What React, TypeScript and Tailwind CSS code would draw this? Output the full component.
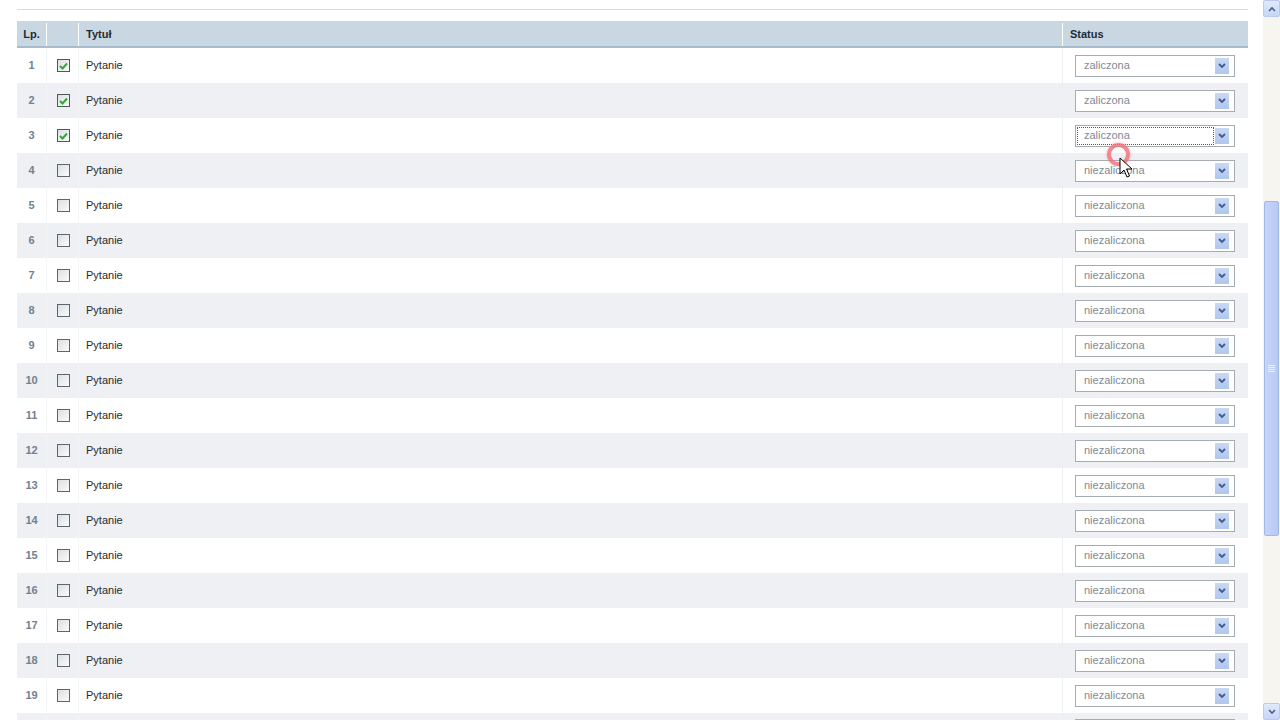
import React from "react";

type Row = { id: number; title: string; done: boolean };

const rows: Row[] = Array.from({ length: 19 }, (_, i) => ({
  id: i + 1,
  title: "Pytanie",
  done: i < 3,
}));

const Checkbox: React.FC<{ checked: boolean }> = ({ checked }) => (
  <span
    className={`ml-[2px] flex h-[13px] w-[13px] items-center justify-center border ${
      checked ? "border-[#4b5d52]" : "border-[#5a6670]"
    } bg-gradient-to-br from-[#dcdfe2] to-[#fbfbfb]`}
  >
    {checked && (
      <svg width="9" height="8" viewBox="0 0 9 8">
        <path d="M1 4 L3.5 6.5 L8 1.5" fill="none" stroke="#2fa83a" strokeWidth="2" />
      </svg>
    )}
  </span>
);

const StatusSelect: React.FC<{ value: string; focused?: boolean }> = ({ value, focused }) => (
  <div className="flex h-[22px] w-[160px] items-center border border-[#a5acb2] bg-white pl-[2px] pr-[5px]">
    <span
      className={`flex h-[16px] flex-1 items-center pl-[6px] text-[11px] text-[#7f8a95] ${
        focused ? "outline outline-1 outline-dotted outline-[#555]" : ""
      }`}
    >
      {value}
    </span>
    <span className="ml-[2px] flex h-[16px] w-[14px] items-center justify-center bg-gradient-to-b from-[#c9d8f3] to-[#b0c6ec]">
      <svg width="8" height="6" viewBox="0 0 8 6">
        <path d="M1 1 L4 4 L7 1" fill="none" stroke="#3f5b94" strokeWidth="1.8" />
      </svg>
    </span>
  </div>
);

const Scrollbar: React.FC = () => (
  <div className="flex h-[720px] w-[17px] flex-col bg-[#f6f5f0]">
    <div className="flex h-[17px] w-[17px] items-center justify-center rounded-[2px] border border-[#b9c9ef] bg-gradient-to-b from-[#e1e9fb] to-[#c6d5f7]">
      <svg width="8" height="6" viewBox="0 0 8 6">
        <path d="M1 5 L4 2 L7 5" fill="none" stroke="#4d6185" strokeWidth="1.6" />
      </svg>
    </div>
    <div className="h-[184px]" />
    <div className="mx-[1px] flex h-[335px] items-center justify-center rounded-[2px] border border-[#a4b8e6] bg-gradient-to-r from-[#c6d4fa] to-[#b9c9f4]">
      <div className="flex flex-col gap-[1px]">
        <span className="h-px w-[7px] bg-[#eef2fd]" />
        <span className="h-px w-[7px] bg-[#eef2fd]" />
        <span className="h-px w-[7px] bg-[#eef2fd]" />
        <span className="h-px w-[7px] bg-[#eef2fd]" />
      </div>
    </div>
    <div className="flex-1" />
    <div className="flex h-[17px] w-[17px] items-center justify-center rounded-[2px] border border-[#b9c9ef] bg-gradient-to-b from-[#e1e9fb] to-[#c6d5f7]">
      <svg width="8" height="6" viewBox="0 0 8 6">
        <path d="M1 1 L4 4 L7 1" fill="none" stroke="#4d6185" strokeWidth="1.6" />
      </svg>
    </div>
  </div>
);

export default function App() {
  return (
    <div
      className="relative flex h-[720px] w-[1280px] overflow-hidden bg-white"
      style={{ fontFamily: '"Liberation Sans", Arial, sans-serif' }}
    >
      <div className="w-[1263px] pl-[17px] pr-[15px]">
        <div className="mt-[9px] h-px bg-[#d6dce1]" />
        <div className="mt-[11px]">
          {/* header */}
          <div className="grid h-[27px] grid-cols-[30px_32px_984px_185px] border-b-2 border-[#a9bccb] bg-[#c9d7e2] pt-[2px] text-[11px] font-bold text-[#1f2a33]">
            <div className="flex items-center justify-center border-r border-white">Lp.</div>
            <div className="border-r border-white" />
            <div className="flex items-center border-r border-white pl-[7px]">Tytuł</div>
            <div className="flex items-center pl-[7px]">Status</div>
          </div>
          {rows.map((row, i) => (
            <div
              key={row.id}
              className={`grid h-[35px] grid-cols-[30px_32px_984px_185px] text-[11px] ${
                i % 2 === 1 ? "bg-[#eef0f3]" : "bg-white"
              }`}
            >
              <div className="flex items-center justify-center border-r border-[#f4f5f7] font-bold text-[#6f8294]">
                {row.id}
              </div>
              <div className="flex items-center justify-center border-r border-[#f4f5f7]">
                <Checkbox checked={row.done} />
              </div>
              <div className="flex items-center border-r border-[#eceef1] pl-[7px] text-[#2b2b2b]">
                {row.title}
              </div>
              <div className="flex items-center pl-[12px]">
                <StatusSelect value={row.done ? "zaliczona" : "niezaliczona"} focused={i === 2} />
              </div>
            </div>
          ))}
          {/* next row, scrolled just past the bottom edge */}
          <div className="grid h-[10px] grid-cols-[30px_32px_984px_185px] bg-[#eef0f3]">
            <div className="border-r border-[#f4f5f7]" />
            <div className="border-r border-[#f4f5f7]" />
            <div className="border-r border-[#eceef1]" />
            <div className="pl-[12px] pt-[6px]">
              <div className="h-[4px] w-[160px] border-x border-t border-[#a5acb2] bg-white" />
            </div>
          </div>
        </div>
      </div>
      <Scrollbar />

      {/* mouse pointer with click ring */}
      <div className="pointer-events-none absolute left-[1107px] top-[143px] h-[23px] w-[23px] rounded-full border-[4px] border-[#f06f74] opacity-80 shadow-[0_0_3px_#f59a9d]" />
      <svg className="pointer-events-none absolute left-[1119px] top-[157px]" width="14" height="22" viewBox="0 0 14 22">
        <path
          d="M1 1 L1 17 L5 13 L8 20 L10.5 19 L7.5 12 L13 12 Z"
          fill="white"
          stroke="black"
          strokeWidth="1"
          strokeLinejoin="round"
        />
      </svg>
    </div>
  );
}
